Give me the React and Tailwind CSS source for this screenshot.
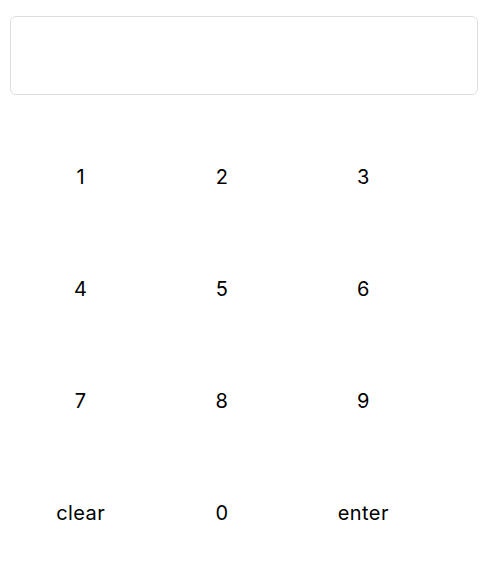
import { useState } from 'react';

const keys = ['1', '2', '3', '4', '5', '6', '7', '8', '9', 'clear', '0', 'enter'];

export default function App() {
   const [value, setValue] = useState('');

   const press = (key) => {
      if (key === 'clear') setValue('');
      else if (key === 'enter') setValue('');
      else setValue((v) => v + key);
   };

   return (
      <div className="min-h-screen bg-white px-[10px] pt-[16px] text-black" style={{ fontFamily: 'Inter, "Noto Sans", sans-serif' }}>
         {/* Display */}
         <input
            value={value}
            readOnly
            className="block h-[79px] w-[468px] rounded-[6px] border border-[#e3dcdf] bg-white px-4 text-[20px] outline-none"
         />

         {/* Keypad */}
         <div className="mt-[26px] grid w-[424px] grid-cols-3">
            {keys.map((key) => (
               <button key={key} onClick={() => press(key)} className="flex h-[112px] items-center justify-center text-[20px] leading-none tracking-[0.02em]">
                  {key}
               </button>
            ))}
         </div>
      </div>
   );
}
